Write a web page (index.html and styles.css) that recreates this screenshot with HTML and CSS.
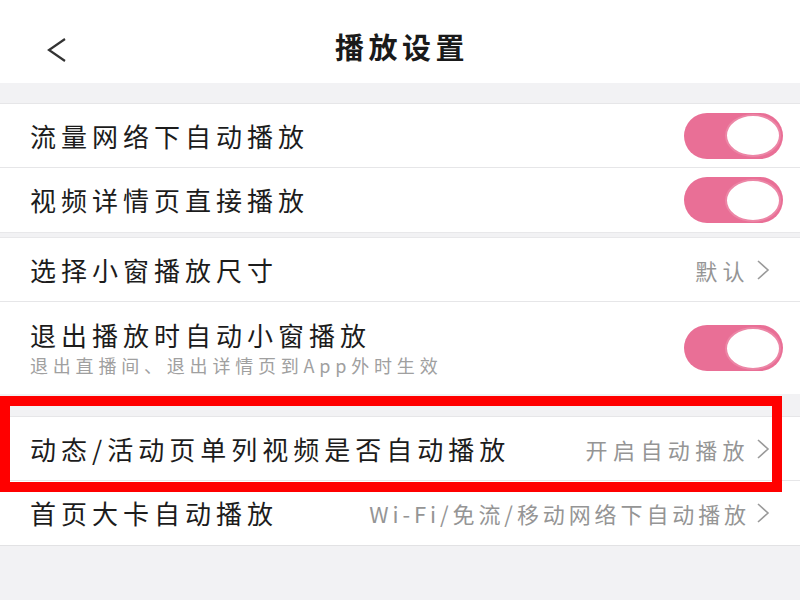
FILE: index.html
```html
<!DOCTYPE html>
<html lang="zh-CN">
<head>
<meta charset="utf-8">
<title>播放设置</title>
<link rel="stylesheet" href="styles.css">
</head>
<body>
<div class="page">
  <header class="nav">
    <svg class="back" width="22" height="26" viewBox="0 0 22 26"><polyline points="18,2 2,13 18,24" fill="none" stroke="#333" stroke-width="2.2" stroke-linejoin="miter"/></svg>
    <h1 class="title">播放设置</h1>
  </header>

  <div class="gap gap-top"></div>
  <section class="group">
    <div class="row"><span class="label">流量网络下自动播放</span><span class="switch"><span class="knob"></span></span></div>
    <div class="row"><span class="label">视频详情页直接播放</span><span class="switch"><span class="knob"></span></span></div>
  </section>

  <div class="gap gap-thin"></div>
  <section class="group">
    <div class="row"><span class="label">选择小窗播放尺寸</span><span class="value">默认<svg class="chev" width="14" height="22" viewBox="0 0 14 22"><polyline points="2,2 12,11 2,20" fill="none" stroke="#9a9a9a" stroke-width="1.6"/></svg></span></div>
    <div class="row row-tall">
      <div class="texts">
        <span class="label">退出播放时自动小窗播放</span>
        <span class="sub">退出直播间、退出详情页到App外时生效</span>
      </div>
      <span class="switch"><span class="knob"></span></span>
    </div>
  </section>

  <div class="gap gap-mid"></div>
  <section class="group">
    <div class="row"><span class="label">动态/活动页单列视频是否自动播放</span><span class="value">开启自动播放<svg class="chev" width="14" height="22" viewBox="0 0 14 22"><polyline points="2,2 12,11 2,20" fill="none" stroke="#9a9a9a" stroke-width="1.6"/></svg></span></div>
    <div class="row"><span class="label">首页大卡自动播放</span><span class="value value-wide">Wi-Fi/免流/移动网络下自动播放<svg class="chev" width="14" height="22" viewBox="0 0 14 22"><polyline points="2,2 12,11 2,20" fill="none" stroke="#9a9a9a" stroke-width="1.6"/></svg></span></div>
  </section>

  <div class="highlight"></div>
</div>
</body>
</html>
```

FILE: styles.css
```css
* { box-sizing: border-box; }
html, body { margin: 0; padding: 0; }
body {
  width: 800px;
  height: 600px;
  overflow: hidden;
  background: #f2f2f4;
  font-family: "Noto Sans CJK SC", "Noto Sans", sans-serif;
  color: #1c1c1c;
}
.page { position: relative; width: 800px; height: 600px; }

.nav {
  height: 83px;
  background: #ffffff;
  display: flex;
  align-items: center;
  justify-content: center;
  position: relative;
}
.back { position: absolute; left: 47px; top: 37px; }
.title {
  margin: 0 0 0 4px;
  font-size: 29px;
  font-weight: 700;
  letter-spacing: 4.5px;
  color: #1a1a1a;
  line-height: 1;
  padding-top: 10px;
}

.gap-top { height: 21px; border-bottom: 1px solid #e6e6e8; }
.gap-thin { height: 6px; border-top: 1px solid #e8e8ea; border-bottom: 1px solid #e8e8ea; }
.gap-mid { height: 23px; border-bottom: 1px solid #e6e6e8; }

.group { background: #ffffff; }
.row {
  height: 64px;
  display: flex;
  align-items: center;
  justify-content: space-between;
  padding: 0 17px 0 30px;
  border-bottom: 1px solid #e6e6e8;
}
.group .row:last-child { border-bottom: none; }
.group:last-of-type { border-bottom: 1px solid #e2e2e4; }
.row-tall { height: 92px; }

.label {
  font-size: 26px;
  letter-spacing: 5px;
  line-height: 1.2;
  white-space: nowrap;
}
.texts { display: flex; flex-direction: column; gap: 5px; }
.sub {
  font-size: 18px;
  letter-spacing: 4.8px;
  color: #a0a0a0;
  line-height: 1.2;
  white-space: nowrap;
}
.value {
  display: flex;
  align-items: center;
  font-size: 22px;
  letter-spacing: 5.4px;
  color: #959595;
  white-space: nowrap;
  padding-right: 13px;
}
.value-wide { letter-spacing: 3.9px; }
.chev { margin-left: 6px; }

.switch {
  width: 99px;
  height: 46px;
  border-radius: 23px;
  background: #e96f96;
  display: flex;
  align-items: center;
  justify-content: flex-end;
  padding-right: 2px;
}
.knob {
  width: 56px;
  height: 43px;
  border-radius: 50%;
  background: #ffffff;
  border: 2px solid #ec86a6;
}

.highlight {
  position: absolute;
  left: 0;
  top: 396px;
  width: 782px;
  height: 96px;
  border: 10px solid #ff0000;
}
```
